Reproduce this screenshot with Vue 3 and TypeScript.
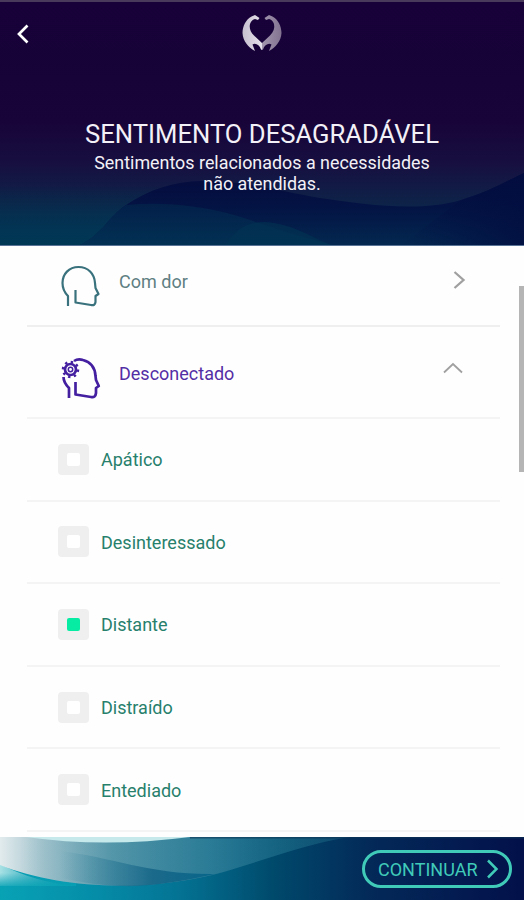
<script setup lang="ts">
import { ref } from 'vue'

interface Feeling {
  label: string
  checked: boolean
}

const feelings = ref<Feeling[]>([
  { label: 'Apático', checked: false },
  { label: 'Desinteressado', checked: false },
  { label: 'Distante', checked: true },
  { label: 'Distraído', checked: false },
  { label: 'Entediado', checked: false },
])

const toggle = (item: Feeling) => {
  item.checked = !item.checked
}
</script>

<template>
  <div class="screen">
    <header class="hero">
      <svg class="backdrop" viewBox="0 0 524 246" preserveAspectRatio="none" aria-hidden="true">
        <defs>
          <linearGradient id="sky" x1="0" y1="0" x2="0" y2="1">
            <stop offset="0" stop-color="#170138" />
            <stop offset=".5" stop-color="#180439" />
            <stop offset=".66" stop-color="#170f40" />
            <stop offset=".84" stop-color="#0d2449" />
            <stop offset="1" stop-color="#04345a" />
          </linearGradient>
          <linearGradient id="teal" x1="0" y1="0" x2="0" y2="1">
            <stop offset="0" stop-color="#003450" stop-opacity="0" />
            <stop offset="1" stop-color="#003854" />
          </linearGradient>
          <linearGradient id="wave" gradientUnits="userSpaceOnUse" x1="0" y1="173" x2="0" y2="246">
            <stop offset="0" stop-color="#060a3d" />
            <stop offset=".45" stop-color="#031343" />
            <stop offset="1" stop-color="#032850" />
          </linearGradient>
          <linearGradient id="swell" x1="0" y1="0" x2="0" y2="1">
            <stop offset="0" stop-color="#031f49" />
            <stop offset="1" stop-color="#023154" />
          </linearGradient>
          <linearGradient id="east" x1="0" y1="0" x2="1" y2="0">
            <stop offset="0" stop-color="#020d40" stop-opacity="0" />
            <stop offset="1" stop-color="#020d40" stop-opacity=".8" />
          </linearGradient>
        </defs>
        <rect width="524" height="246" fill="url(#sky)" />
        <rect y="185" width="160" height="61" fill="url(#teal)" />
        <path d="M78 246C102 235 108 217 126 205C148 190 174 181 202 181C246 181 278 191 320 198C366 205 421 212 461 200C488 192 507 181 524 173V246Z" fill="url(#wave)" />
        <path d="M78 246C102 235 108 217 126 205C169 201 212 207 250 220C290 234 316 240 336 246Z" fill="url(#swell)" />
        <path d="M225 246C235 230 246 222 265 222C294 224 312 238 334 246Z" fill="#023454" opacity=".6" />
        <path d="M400 246L461 200C488 192 507 181 524 173V246Z" fill="url(#east)" />
        <rect width="524" height="2" fill="#493a5c" />
        <rect y="245" width="524" height="1" fill="#587395" />
      </svg>
      <div class="navbar">
        <button class="back" aria-label="Voltar">
          <svg width="14" height="22" viewBox="0 0 14 22"><path d="M12.500 2.500L4 11L12.500 19.500" fill="none" stroke="#fff" stroke-width="2.700" /></svg>
        </button>
        <svg class="logo" width="42" height="40" viewBox="0 0 42 40" aria-hidden="true">
          <defs>
            <linearGradient id="silver" x1="0" y1="0" x2="1" y2="0">
              <stop offset="0" stop-color="#c6bfcf" /><stop offset="1" stop-color="#e6e2eb" />
            </linearGradient>
            <linearGradient id="violet" x1="0" y1="0" x2="1" y2="0">
              <stop offset="0" stop-color="#a196ae" /><stop offset="1" stop-color="#837391" />
            </linearGradient>
          </defs>
          <path d="M18.500 4L14 1L10.500 2.500C5 5.500 1.500 12 1.500 19C2 27 7 33 14 37L11.500 30.500C14.500 28.500 18.500 31 20 35.500L21 36V29L13 21.500C9.500 18 8 14 9 10C10 7 12 5.500 14 5L17 6Z" fill="url(#silver)" />
          <path d="M23.500 4L28 1L31.500 2.500C37 5.500 40.500 12 40.500 19C40 27 35 33 28 37L30.500 30.500C27.500 28.500 23.500 31 22 35.500L21 36V29L29 21.500C32.500 18 34 14 33 10C32 7 30 5.500 28 5L25 6Z" fill="url(#violet)" />
        </svg>
      </div>
      <h1>SENTIMENTO DESAGRADÁVEL</h1>
      <p>Sentimentos relacionados a necessidades<br />não atendidas.</p>
    </header>

    <main class="list">
      <section class="group closed">
        <svg class="head" width="42" height="44" viewBox="0 0 42 44">
          <path d="M8 41V31C4 27 2.500 23 2.500 18C2.500 9 9 2 18.500 2C28 2 34.500 8.500 35 18L35.500 23L38.500 29L35.500 31V37Q35 41 31 40L15.500 37.500V25" />
        </svg>
        <span class="name pain">Com dor</span>
        <svg class="arrow" width="14" height="22" viewBox="0 0 14 22"><path d="M2.500 3L11.500 11L2.500 19" stroke-width="2.300" /></svg>
      </section>
      <section class="group open">
        <svg class="head purple" width="42" height="44" viewBox="0 0 42 44">
          <path d="M9 42V32C5.500 28.500 3.500 26 3.500 21M14 5C17 3 20 3 23 4C31 6 35 12 35.500 20L36 24L38.800 30L36 32V37Q35.500 42 31 41L15.500 38.500V26" />
          <circle cx="10.500" cy="13.500" r="5.500" />
          <circle cx="10.500" cy="13.500" r="2.200" stroke-width="1.500" />
          <circle cx="10.500" cy="13.500" r="7.500" stroke-width="2.500" stroke-dasharray="2.400 3.490" />
        </svg>
        <span class="name active">Desconectado</span>
        <svg class="arrow" width="22" height="14" viewBox="0 0 22 14"><path d="M2 11.500L11 3L20 11.500" stroke-width="1.800" /></svg>
      </section>
      <div v-for="item in feelings" :key="item.label" class="item" @click="toggle(item)">
        <span class="box"><span class="mark" :class="{ on: item.checked }"></span></span>
        <span class="label">{{ item.label }}</span>
      </div>
      <div class="scrollbar"></div>
    </main>

    <footer class="footer">
      <svg class="backdrop" viewBox="0 0 524 63" preserveAspectRatio="none" aria-hidden="true">
        <defs>
          <linearGradient id="sea" x1="0" y1="0" x2="1" y2="0">
            <stop offset="0" stop-color="#08a2b5" />
            <stop offset=".18" stop-color="#058da8" />
            <stop offset=".34" stop-color="#047394" />
            <stop offset=".52" stop-color="#004a6c" />
            <stop offset=".7" stop-color="#032a59" />
            <stop offset="1" stop-color="#03104a" />
          </linearGradient>
          <linearGradient id="foam" x1="0" y1="0" x2="350" y2="0" gradientUnits="userSpaceOnUse">
            <stop offset="0" stop-color="#e2ebed" />
            <stop offset=".12" stop-color="#a5c5ce" />
            <stop offset=".32" stop-color="#5f9cae" />
            <stop offset=".6" stop-color="#2c7a96" />
            <stop offset=".8" stop-color="#125d7d" stop-opacity=".65" />
            <stop offset="1" stop-color="#0b4164" stop-opacity="0" />
          </linearGradient>
          <linearGradient id="deep" gradientUnits="userSpaceOnUse" x1="60" y1="0" x2="215" y2="0">
            <stop offset="0" stop-color="#3b87a0" stop-opacity="0" />
            <stop offset=".6" stop-color="#176688" stop-opacity=".9" />
            <stop offset="1" stop-color="#07668a" />
          </linearGradient>
          <linearGradient id="mist" x1="0" y1="0" x2="1" y2="0">
            <stop offset="0" stop-color="#a8e1e4" />
            <stop offset="1" stop-color="#2ba5b9" stop-opacity="0" />
          </linearGradient>
          <linearGradient id="tide" x1="0" y1="0" x2="0" y2="1">
            <stop offset="0" stop-color="#08a2b5" stop-opacity="0" />
            <stop offset="1" stop-color="#08a2b5" stop-opacity=".85" />
          </linearGradient>
          <linearGradient id="shade" gradientUnits="userSpaceOnUse" x1="20" y1="0" x2="160" y2="0">
            <stop offset="0" stop-color="#287f97" stop-opacity="0" />
            <stop offset="1" stop-color="#287f97" stop-opacity=".3" />
          </linearGradient>
        </defs>
        <rect width="524" height="63" fill="url(#sea)" />
        <path d="M0 27Q34 45 76 49H0Z" fill="url(#mist)" />
        <path d="M0 36H76V49H0Z" fill="url(#tide)" />
        <path d="M0 0H350C304 7 254 27 212 38C136 56 55 50 0 28Z" fill="url(#foam)" />
        <path d="M0 0H350C304 7 254 27 212 38C136 56 55 50 0 28Z" fill="url(#shade)" />
        <path d="M60 14C112 20 150 38 215 37C180 45 147 50 120 49C96 48 72 44 54 39Z" fill="url(#deep)" />
        <path d="M26 0Q104 11 190 0Z" fill="#c6e9ec" />
        <rect x="190" width="334" height="1.500" fill="#0b3454" opacity=".6" />
      </svg>
      <button class="continue">
        <span>CONTINUAR</span>
        <svg width="13" height="22" viewBox="0 0 13 22"><path d="M2 2.500L10.500 11L2 19.500" fill="none" stroke="#40cbb9" stroke-width="2.500" /></svg>
      </button>
    </footer>
  </div>
</template>

<style>
body {
  margin: 0;
  background: #fff;
}
</style>

<style scoped>
.screen {
  width: 524px;
  height: 900px;
  display: flex;
  flex-direction: column;
  overflow: hidden;
  font-family: Roboto, "Liberation Sans", sans-serif;
  background: #fefefe;
}
.hero {
  position: relative;
  flex: none;
  height: 246px;
  text-align: center;
  color: #f3f1f7;
}
.backdrop {
  position: absolute;
  inset: 0;
  width: 100%;
  height: 100%;
}
.navbar {
  position: relative;
  display: grid;
  grid-template-columns: 1fr 42px 1fr;
  height: 118px;
  padding: 14px 15px 0;
  box-sizing: border-box;
  align-items: start;
}
.back {
  justify-self: start;
  margin-top: 9px;
  padding: 0;
  border: 0;
  background: none;
  height: 22px;
}
button svg {
  display: block;
}
h1 {
  position: relative;
  margin: 0;
  font-size: 25.65px;
  line-height: 32px;
  font-weight: 400;
  white-space: nowrap;
}
p {
  position: relative;
  margin: 2px 0 0;
  font-size: 17.9px;
  line-height: 21px;
}
.list {
  position: relative;
  flex: 1;
  min-height: 0;
  overflow: hidden;
  padding: 0 24px 0 27px;
}
.group {
  display: flex;
  box-sizing: border-box;
  padding-left: 33px;
  border-bottom: 2px solid #efeff0;
}
.closed {
  height: 81px;
  padding-top: 19px;
}
.open {
  height: 92px;
  padding-top: 20px;
  border-bottom-color: #f4f4f4;
}
.open .head {
  margin-top: 9px;
}
.head {
  fill: none;
  stroke: #39717c;
  stroke-width: 2.2;
  stroke-linejoin: round;
}
.purple {
  stroke: #4420a1;
  stroke-width: 2.7;
}
.name {
  margin-left: 17px;
  font-size: 18px;
  line-height: 34px;
  flex: 1;
}
.pain {
  color: #607f82;
}
.open .name {
  padding-top: 10px;
}
.active {
  color: #542ea5;
}
.arrow {
  fill: none;
  stroke: #a0a0a0;
  margin: 4px 34px 0 0;
}
.open .arrow {
  margin: 14px 36px 0 0;
}
.closed .arrow {
  margin-top: 4px;
}
.closed .name {
  line-height: 33px;
}
.item {
  height: 82.6px;
  box-sizing: border-box;
  border-bottom: 2px solid #f4f4f4;
  display: flex;
  align-items: center;
  padding-left: 31px;
}
.box {
  display: grid;
  place-items: center;
  width: 31px;
  height: 31px;
  border-radius: 4px;
  background: #efefef;
}
.mark {
  width: 13px;
  height: 13px;
  border-radius: 2px;
  background: #fff;
}
.mark.on {
  background: #06eca3;
}
.label {
  margin-left: 12px;
  padding-top: 1.7px;
  font-size: 18px;
  line-height: 22px;
  color: #27806c;
}
.scrollbar {
  position: absolute;
  right: 0;
  top: 40px;
  width: 5px;
  height: 186px;
  background: #b5b5b5;
}
.footer {
  position: relative;
  flex: none;
  height: 63px;
  display: flex;
  justify-content: flex-end;
  align-items: center;
  padding-right: 12px;
  box-sizing: border-box;
}
.continue {
  position: relative;
  width: 150px;
  height: 38px;
  box-sizing: border-box;
  border: 3px solid #40cbb9;
  border-radius: 19px;
  background: transparent;
  color: #40cbb9;
  font: 18px/22px Roboto, "Liberation Sans", sans-serif;
  padding: 2px 10px 0 13px;
  display: flex;
  align-items: center;
  justify-content: space-between;
}
.continue svg {
  margin-top: -2px;
}
</style>
